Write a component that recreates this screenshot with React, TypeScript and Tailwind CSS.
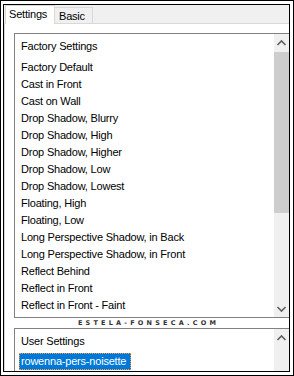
import React from "react";

const Chevron = ({ up }: { up: boolean }) => (
  <svg width="15" height="8" viewBox="0 0 15 8" className="block">
    <polyline
      points={up ? "3.5,6 7.5,2 11.5,6" : "3.5,2 7.5,6 11.5,2"}
      fill="none"
      stroke="#606060"
      strokeWidth="1.6"
    />
  </svg>
);

const items = [
  "Factory Default",
  "Cast in Front",
  "Cast on Wall",
  "Drop Shadow, Blurry",
  "Drop Shadow, High",
  "Drop Shadow, Higher",
  "Drop Shadow, Low",
  "Drop Shadow, Lowest",
  "Floating, High",
  "Floating, Low",
  "Long Perspective Shadow, in Back",
  "Long Perspective Shadow, in Front",
  "Reflect Behind",
  "Reflect in Front",
  "Reflect in Front - Faint",
];

export default function App() {
  return (
    <div className="w-[294px] h-[376px] bg-white border border-black pl-[2px] pt-[3px] pr-[3px] pb-[3px] font-['Liberation_Sans',Arial,sans-serif] text-[11px] tracking-[-0.2px] text-black overflow-hidden">
      <div className="h-full border border-black bg-[#f0f0f0] flex flex-col overflow-hidden">
        {/* tab strip */}
        <div className="h-[18px] shrink-0 flex items-end pl-[1px]">
          <div className="relative z-10 w-[50px] h-[19px] -mb-[1px] bg-white border-l border-t border-r border-[#d9d9d9] pl-[3px] leading-[17px]">
            Settings
          </div>
          <div className="w-[38px] h-[16px] bg-[#f0f0f0] border-t border-r border-[#d9d9d9] pl-[4px] leading-[16px]">
            Basic
          </div>
        </div>
        {/* panel */}
        <div className="flex-1 bg-white border-t border-l border-[#d9d9d9] overflow-hidden">
          {/* list 1 */}
          <div className="ml-[9px] mt-[9px] w-[276px] h-[285px] border border-[#828282] flex">
            <div className="flex-1 pl-[6px] pt-[4px] leading-[17px] whitespace-nowrap overflow-hidden">
              <div className="mb-[4px]">Factory Settings</div>
              {items.map((t) => (
                <div key={t}>{t}</div>
              ))}
            </div>
            <div className="w-[15px] bg-[#f0f0f0] flex flex-col">
              <div className="h-[18px] flex items-center justify-center">
                <Chevron up />
              </div>
              <div className="h-[161px] bg-[#cdcdcd]" />
              <div className="flex-1" />
              <div className="h-[17px] flex items-center justify-center">
                <Chevron up={false} />
              </div>
            </div>
          </div>
          {/* watermark */}
          <div className="h-[10px] flex items-center justify-center">
            <span className="text-[6.5px] leading-none font-bold tracking-[3.2px] text-[#333] font-['DejaVu_Sans',sans-serif] pl-[3px]">
              ESTELA-FONSECA.COM
            </span>
          </div>
          {/* list 2 */}
          <div className="ml-[9px] w-[276px] h-[60px] border border-[#828282] flex">
            <div className="flex-1 pt-[4px] leading-[17px] whitespace-nowrap overflow-hidden">
              <div className="pl-[6px] mb-[3px]">User Settings</div>
              <div className="ml-[4px] w-[112px] h-[17px] bg-[#0078d7] border border-dotted border-[#f39c3a] text-white pl-[1px] leading-[15px]">
                rowenna-pers-noisette
              </div>
            </div>
            <div className="w-[15px] bg-[#f0f0f0] flex flex-col">
              <div className="h-[17px] flex items-center justify-center">
                <Chevron up />
              </div>
            </div>
          </div>
        </div>
      </div>
    </div>
  );
}
